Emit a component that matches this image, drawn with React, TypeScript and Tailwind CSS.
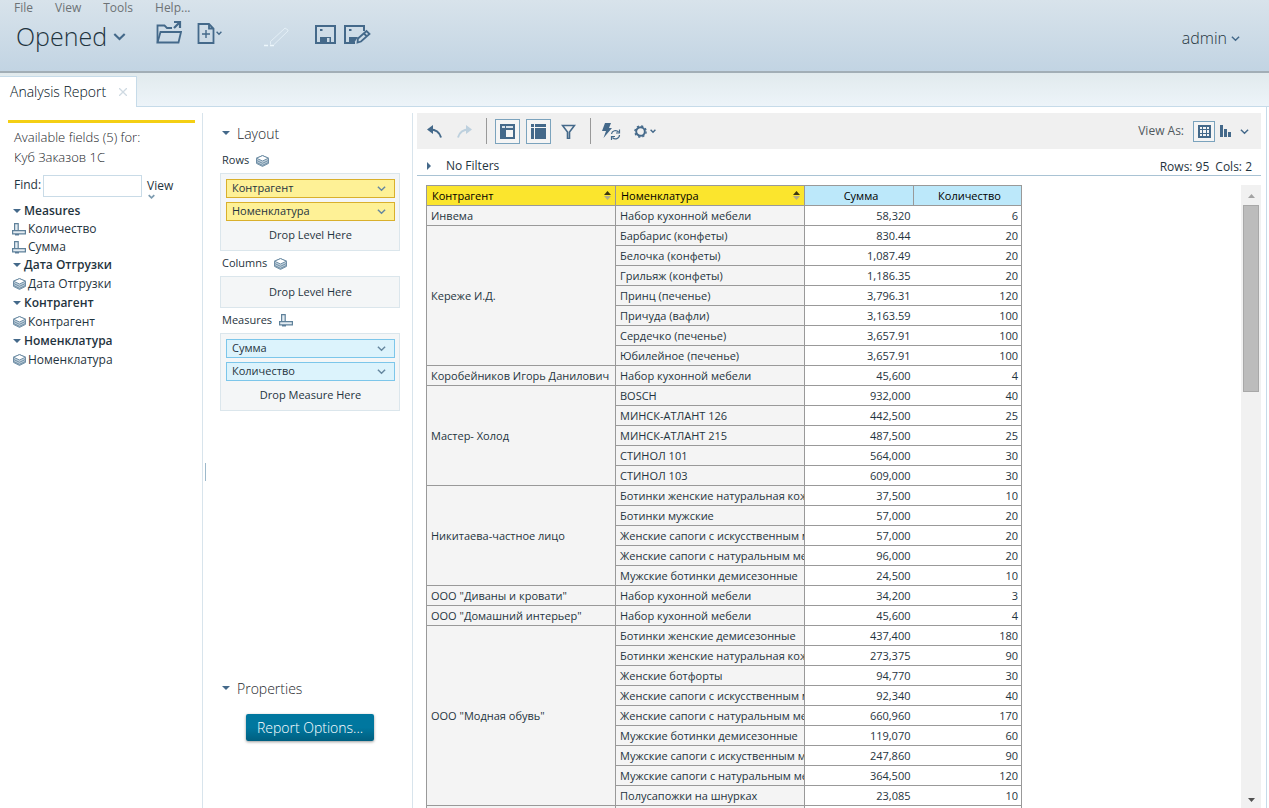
import type { ReactNode } from "react";
import { clsx } from "clsx";

type Item = [name: string, sum: string, qty: string];

const GROUPS: { name: string; items: Item[] }[] = [
  { name: "Инвема", items: [["Набор кухонной мебели", "58,320", "6"]] },
  {
    name: "Кереже И.Д.",
    items: [
      ["Барбарис (конфеты)", "830.44", "20"],
      ["Белочка (конфеты)", "1,087.49", "20"],
      ["Грильяж (конфеты)", "1,186.35", "20"],
      ["Принц (печенье)", "3,796.31", "120"],
      ["Причуда (вафли)", "3,163.59", "100"],
      ["Сердечко (печенье)", "3,657.91", "100"],
      ["Юбилейное (печенье)", "3,657.91", "100"],
    ],
  },
  { name: "Коробейников Игорь Данилович", items: [["Набор кухонной мебели", "45,600", "4"]] },
  {
    name: "Мастер- Холод",
    items: [
      ["BOSCH", "932,000", "40"],
      ["МИНСК-АТЛАНТ 126", "442,500", "25"],
      ["МИНСК-АТЛАНТ 215", "487,500", "25"],
      ["СТИНОЛ 101", "564,000", "30"],
      ["СТИНОЛ 103", "609,000", "30"],
    ],
  },
  {
    name: "Никитаева-частное лицо",
    items: [
      ["Ботинки женские натуральная кожа", "37,500", "10"],
      ["Ботинки мужские", "57,000", "20"],
      ["Женские сапоги с искусственным мехом", "57,000", "20"],
      ["Женские сапоги с натуральным мехом", "96,000", "20"],
      ["Мужские ботинки демисезонные", "24,500", "10"],
    ],
  },
  { name: 'ООО "Диваны и кровати"', items: [["Набор кухонной мебели", "34,200", "3"]] },
  { name: 'ООО "Домашний интерьер"', items: [["Набор кухонной мебели", "45,600", "4"]] },
  {
    name: 'ООО "Модная обувь"',
    items: [
      ["Ботинки женские демисезонные", "437,400", "180"],
      ["Ботинки женские натуральная кожа", "273,375", "90"],
      ["Женские ботфорты", "94,770", "30"],
      ["Женские сапоги с искусственным мехом", "92,340", "40"],
      ["Женские сапоги с натуральным мехом", "660,960", "170"],
      ["Мужские ботинки демисезонные", "119,070", "60"],
      ["Мужские сапоги с искуственным мехом", "247,860", "90"],
      ["Мужские сапоги с натуральным мехом", "364,500", "120"],
      ["Полусапожки на шнурках", "23,085", "10"],
    ],
  },
  { name: "", items: [["", "", ""]] },
];

const FIELDS = [
  { name: "Measures", measure: true, fields: ["Количество", "Сумма"] },
  { name: "Дата Отгрузки", measure: false, fields: ["Дата Отгрузки"] },
  { name: "Контрагент", measure: false, fields: ["Контрагент"] },
  { name: "Номенклатура", measure: false, fields: ["Номенклатура"] },
];

function Chevron({ className, size = 10 }: { className?: string; size?: number }) {
  return (
    <svg width={size} height={size} viewBox="0 0 10 10" fill="none" stroke="currentColor" strokeWidth={size < 8 ? 2.4 : 1.6} className={className}>
      <path d="M1 3l4 4 4-4" />
    </svg>
  );
}

function Triangle({ right = false }: { right?: boolean }) {
  return (
    <svg width="8" height="8" viewBox="0 0 8 8" fill="#44698a" className="shrink-0">
      <path d={right ? "M2 0v8l4-4z" : "M0 2h8L4 6z"} />
    </svg>
  );
}

function LevelIcon() {
  return (
    <svg width="13" height="12" viewBox="0 0 13 12" fill="none" stroke="#6f8ea5" className="shrink-0">
      <path d="M.5 3.2L6.5.6l6 2.6v5.2l-6 3-6-3z" fill="#c3d2dd" />
      <path d="M.5 3.2L6.5.6l6 2.6-6 2.8z" fill="#fff" />
      <path d="M.5 5.4l6 2.9 6-2.9M.5 7.4l6 2.9 6-2.9" />
    </svg>
  );
}

function MeasureIcon() {
  return (
    <svg width="14" height="13" viewBox="0 0 14 13" fill="none" stroke="#5f819a" strokeWidth="1.2" className="shrink-0">
      <path d="M2.6.6h3.6v7H2.6z" fill="#e4ecf2" />
      <path d="M.6 7.6h12.8v3.2H.6z" fill="#e4ecf2" />
      <path d="M3 11.8h4" stroke="#44698a" />
    </svg>
  );
}

function IconButton({ label, boxed, className, children }: { label: string; boxed?: boolean; className?: string; children: ReactNode }) {
  return (
    <button aria-label={label} className={clsx("flex shrink-0 items-center justify-center text-[#44698a]", boxed && "border border-[#7ba3bd] bg-[#f5f5f5]", className)}>
      {children}
    </button>
  );
}

function Header() {
  return (
    <header className="h-[73px] shrink-0 border-b-2 border-[#a2aeb6] bg-linear-to-b from-[#d8e3eb] to-[#c2d4e3]">
      <nav className="flex h-4 gap-[22px] pl-[14px] text-[12px] leading-4 text-[#6d7275]">
        <a href="#file">File</a>
        <a href="#view">View</a>
        <a href="#tools">Tools</a>
        <a href="#help">Help...</a>
      </nav>
      <div className="flex h-10 items-center pl-4">
        <button className="flex w-[140px] items-center gap-1.5 text-[25px] font-light leading-8 text-[#1f3440]">
          Opened
          <Chevron size={13} className="text-[#44698a]" />
        </button>
        <IconButton label="Open" className="mb-2">
          <svg width="26" height="24" viewBox="0 0 26 24" fill="none" stroke="currentColor" strokeWidth="1.8">
            <path d="M1.5 22.5V5.500h7l2.500 2.500H16M22 11v2" />
            <path d="M1.5 22.500L4.500 12h20.500L22.500 22.500z" />
            <path d="M18 8L23.500 2.500M18 2h6v6" strokeWidth="2.200" />
          </svg>
        </IconButton>
        <IconButton label="New" className="mb-1.5 ml-[15px] gap-px">
          <svg width="18" height="21" viewBox="0 0 18 21" fill="none" stroke="currentColor" strokeWidth="1.8">
            <path d="M1.500 1h10.500L16.500 5.500V20h-15zM12 1v4.500h4.500" />
            <path d="M5 11h8M9 7v8" strokeWidth="1.400" />
          </svg>
          <Chevron size={6} />
        </IconButton>
        <svg width="26" height="21" viewBox="0 0 26 21" fill="none" stroke="#edf7fc" strokeWidth="1" className="ml-[42px]">
          <path d="M0 19.500h4M6 19.500h4" strokeWidth="1.500" />
          <path d="M6.500 18.500v-3L20 3M10 18.500L24 5M20 3l1-1 3 2v1" strokeOpacity="0.7" />
        </svg>
        <IconButton label="Save" className="mb-1 ml-[25px]">
          <svg width="21" height="19" viewBox="0 0 21 19" fill="none" stroke="currentColor" strokeWidth="2">
            <path d="M1 1h19v17H1z" />
            <path d="M5 18v-6h11v6" fill="currentColor" stroke="none" />
            <path d="M12 13h2.500v4H12z" fill="#cbdae6" stroke="none" />
            <path d="M5 5h2.500" />
          </svg>
        </IconButton>
        <IconButton label="Save As" className="mb-1 ml-2">
          <svg width="27" height="19" viewBox="0 0 27 19" fill="none" stroke="currentColor" strokeWidth="2">
            <path d="M11 18H1V1h19v5" />
            <path d="M5 18v-6h9l-4 6z" fill="currentColor" stroke="none" />
            <path d="M5 5h2.500" />
            <path d="M13.500 17.500l.5-4 8.500-7.500 3 3-8.500 7.500zM20 8.500l3 3" strokeWidth="1.800" />
          </svg>
        </IconButton>
        <button className="ml-auto mr-[29px] mt-1 flex items-center gap-1 text-[16px] font-light leading-6 text-[#1f3440]">
          admin
          <Chevron size={9} className="text-[#44698a]" />
        </button>
      </div>
    </header>
  );
}

function Tabs() {
  return (
    <div className="flex h-[34px] shrink-0 items-end border-b border-[#c6dbe9] bg-linear-to-b from-[#e1eaed] to-[#edf4f9]">
      <div className="-mb-px flex h-[31px] w-[137px] items-center justify-between border-r border-t border-[#c6dbe9] bg-white pl-[10px] pr-[9px]">
        <button className="whitespace-nowrap text-[14px] font-light leading-5 text-[#00101a]">Analysis Report</button>
        <button aria-label="Close tab" className="text-[#cfdae2]">
          <svg width="8" height="8" viewBox="0 0 8 8" stroke="currentColor" strokeWidth="1.3">
            <path d="M0 0l8 8M8 0L0 8" />
          </svg>
        </button>
      </div>
    </div>
  );
}

function FieldList() {
  return (
    <aside className="w-[203px] shrink-0 border-r border-[#d8e4ec] pl-2 pr-[7px] pt-[7px]">
      <div className="h-[3px] bg-[#f4cf14]" />
      <div className="mt-1 pl-1.5 text-[13px] font-light leading-5 text-[#1d272c]">
        <p>Available fields (5) for:</p>
        <p>Куб Заказов 1С</p>
      </div>
      <div className="mt-2 flex h-[27px] items-start pl-1.5 text-[12px]">
        <label htmlFor="find" className="w-[29px] leading-5">Find:</label>
        <input id="find" className="h-[22px] w-[99px] border border-[#c9dbe7] px-1 outline-none" />
        <button className="ml-[5px] flex flex-col items-start leading-[22px]">
          View
          <Chevron size={7} className="-mt-1 ml-px text-[#7d9bb0]" />
        </button>
      </div>
      <ul className="text-[12px]">
        {FIELDS.map((group) => (
          <li key={group.name}>
            <button className="flex h-[18px] items-center gap-[3px] pl-[5px] font-semibold leading-[18px]">
              <Triangle />
              {group.name}
            </button>
            <ul>
              {group.fields.map((field) => (
                <li key={field} className={clsx("flex items-center gap-[2px] leading-[18px]", group.measure ? "h-[18px] pl-1" : "h-5 pl-[5px]")}>
                  {group.measure ? <MeasureIcon /> : <LevelIcon />}
                  {field}
                </li>
              ))}
            </ul>
          </li>
        ))}
      </ul>
    </aside>
  );
}

function DropZone({ title, icon, hint, items = [], measure }: { title: string; icon: ReactNode; hint: string; items?: string[]; measure?: boolean }) {
  return (
    <section className="text-[11px]">
      <h3 className="flex h-[25px] items-center gap-[7px] pl-0.5">
        {title}
        {icon}
      </h3>
      <div className="flex flex-col gap-1 border border-[#dbe6ec] bg-[#f4f6f7] py-[5px] pl-[5px] pr-1">
        {items.map((item) => (
          <button key={item} className={clsx("flex h-[19px] items-center justify-between border pl-[5px] pr-2", measure ? "border-[#7cc6ea] bg-[#dcf3fc]" : "border-[#d9b02c] bg-[#fef196]")}>
            {item}
            <Chevron size={9} className="text-[#6688a0]" />
          </button>
        ))}
        <p className="h-5 text-center leading-5">{hint}</p>
      </div>
    </section>
  );
}

function LayoutPanel() {
  return (
    <aside className="flex w-[207px] shrink-0 flex-col border-r border-[#d8e4ec] pl-[14px] pr-3 pt-[7px]">
      <button className="mb-0.5 flex h-[26px] items-center gap-[7px] pl-0.5 text-[14px] font-light text-[#1d272c]">
        <Triangle />
        Layout
      </button>
      <DropZone title="Rows" icon={<LevelIcon />} hint="Drop Level Here" items={["Контрагент", "Номенклатура"]} />
      <DropZone title="Columns" icon={<LevelIcon />} hint="Drop Level Here" />
      <DropZone title="Measures" icon={<MeasureIcon />} hint="Drop Measure Here" items={["Сумма", "Количество"]} measure />
      <div className="mb-[67px] mt-auto flex flex-col items-start">
        <button className="flex h-6 items-center gap-[7px] pl-0.5 text-[14px] font-light text-[#1d272c]">
          <Triangle />
          Properties
        </button>
        <button className="mt-3.5 h-[27px] w-32 self-center whitespace-nowrap rounded-xs bg-linear-to-b from-[#00779f] from-50% to-[#005f80] text-[14px] font-light text-white shadow-[0_1px_3px_#0006]">
          Report Options...
        </button>
      </div>
    </aside>
  );
}

function Toolbar() {
  return (
    <div className="flex h-9 shrink-0 items-center bg-[#f0f0f0] pl-2 pr-3 text-[#44698a]">
      <IconButton label="Undo" className="w-[18px]">
        <svg width="15" height="13" viewBox="0 0 15 13" fill="none" stroke="currentColor" strokeWidth="2">
          <path d="M3 4.500c6 0 9.500 2.500 11 8" />
          <path d="M6 0v9L0 4.500z" fill="currentColor" stroke="none" />
        </svg>
      </IconButton>
      <IconButton label="Redo" className="ml-3 w-[18px] opacity-35">
        <svg width="15" height="13" viewBox="0 0 15 13" fill="none" stroke="#5f97bd" strokeWidth="2">
          <path d="M12 4.500c-6 0-9.500 2.500-11 8" />
          <path d="M9 0v9l6-4.500z" fill="#5f97bd" stroke="none" />
        </svg>
      </IconButton>
      <span className="ml-[13px] h-[26px] w-px bg-[#999]" />
      <IconButton label="Field list" boxed className="ml-2 size-[25px]">
        <svg width="15" height="15" viewBox="0 0 15 15" fill="currentColor">
          <path d="M0 0h15v15H0z" />
          <path d="M6 6h7v7H6z" fill="#f5f5f5" />
          <path d="M2 2h3v2H2zM6 2h7v2H6z" fill="#d8e2ea" />
        </svg>
      </IconButton>
      <IconButton label="Layout panel" boxed className="ml-1.5 size-[25px]">
        <svg width="15" height="15" viewBox="0 0 15 15" fill="currentColor">
          <path d="M0 0h3v3H0zM4 0h11v3H4zM0 4h3v11H0zM4 4h11v11H4z" />
        </svg>
      </IconButton>
      <IconButton label="Filters" className="ml-[9px] w-4">
        <svg width="15" height="15" viewBox="0 0 15 15" fill="none" stroke="currentColor" strokeWidth="1.6">
          <path d="M1.500 1.500h12L8.500 8v6.500h-2V8z" />
        </svg>
      </IconButton>
      <span className="ml-[14px] h-[26px] w-px bg-[#999]" />
      <IconButton label="Auto refresh" className="ml-[11px]">
        <svg width="19" height="17" viewBox="0 0 19 17" fill="none" stroke="currentColor" strokeWidth="1.2">
          <path d="M3 0h6L7 5h3L1.500 15 4 8H0z" fill="currentColor" stroke="none" />
          <path d="M9.500 11a4 4 0 0 1 7-2M17.500 12a4 4 0 0 1-7 2.500M17.500 6.500V10H14M9.500 17v-3.500H13" />
        </svg>
      </IconButton>
      <IconButton label="More options" className="ml-[13px] gap-[3px]">
        <svg width="13" height="13" viewBox="0 0 13 13" fill="none" stroke="currentColor">
          <circle cx="6.500" cy="6.500" r="4.300" strokeWidth="1.900" />
          <circle cx="6.500" cy="6.500" r="5.600" strokeWidth="1.400" strokeDasharray="2.200 2.200" />
        </svg>
        <Chevron size={6} />
      </IconButton>
      <span className="ml-auto whitespace-nowrap text-[12px] text-[#50595e]">View As:</span>
      <IconButton label="Table" boxed className="ml-[9px] h-[21px] w-[22px]">
        <svg width="13" height="13" viewBox="0 0 13 13" fill="none" stroke="currentColor">
          <path d="M1 1h11v11H1z" strokeWidth="2" />
          <path d="M4.500 1v11M8.500 1v11M1 4.500h11M1 8.500h11" />
        </svg>
      </IconButton>
      <IconButton label="Chart" className="ml-[5px]">
        <svg width="11" height="12" viewBox="0 0 11 12" fill="currentColor">
          <path d="M0 0h3v12H0zM4 4h3v8H4zM8 7h3v5H8z" />
        </svg>
      </IconButton>
      <IconButton label="Chart type" className="ml-[9px]">
        <Chevron size={9} />
      </IconButton>
    </div>
  );
}

function SortIcon() {
  return (
    <svg width="7" height="9" viewBox="0 0 7 9" className="shrink-0">
      <path d="M0 4l3.500-4L7 4z" fill="#3b3610" />
      <path d="M0 5h7L3.500 9z" fill="#b3ad8a" />
    </svg>
  );
}

function PivotTable() {
  return (
    <table className="w-[596px] shrink-0 table-fixed border-collapse self-start whitespace-nowrap text-[11px] leading-[19px]">
      <colgroup>
        <col className="w-[189px]" />
        <col className="w-[189px]" />
        <col className="w-[109px]" />
        <col className="w-[108px]" />
      </colgroup>
      <thead className="text-black">
        <tr className="h-5">
          {["Контрагент", "Номенклатура"].map((name) => (
            <th key={name} className="border border-[#999] bg-[#fbe52d] py-0 pl-[5px] pr-1 font-medium">
              <span className="flex items-center justify-between">
                {name}
                <SortIcon />
              </span>
            </th>
          ))}
          <th className="border border-[#999] bg-[#bce8fa] p-0 pl-1 font-medium">Сумма</th>
          <th className="border border-[#999] bg-[#bce8fa] p-0 pl-1 font-medium">Количество</th>
        </tr>
      </thead>
      <tbody>
        {GROUPS.map((group) =>
          group.items.map(([name, sum, qty], i) => (
            <tr key={`${group.name}-${i}`} className="h-5">
              {i === 0 && (
                <td rowSpan={group.items.length} className="border border-[#999] bg-[#f4f4f4] p-0 pl-1">
                  {group.name}
                </td>
              )}
              <td className="overflow-hidden border border-[#999] bg-[#f4f4f4] p-0 pl-1">{name}</td>
              <td className="border-y border-[#999] p-0 pr-[3px] text-right">{sum}</td>
              <td className="border-y border-r border-[#999] p-0 pr-[3px] text-right">{qty}</td>
            </tr>
          ))
        )}
      </tbody>
    </table>
  );
}

function ScrollBar() {
  return (
    <div className="ml-auto flex w-5 shrink-0 flex-col items-center bg-[#f1f1f1]">
      <svg width="7" height="20" viewBox="0 0 7 20" fill="#a3a3a3" className="shrink-0">
        <path d="M0 13l3.500-4L7 13z" />
      </svg>
      <div className="h-[30%] w-4 border border-[#a8a8a8] bg-[#bcbcbc]" />
      <svg width="7" height="16" viewBox="0 0 7 16" fill="#505050" className="mt-auto shrink-0">
        <path d="M0 6h7l-3.500 4z" />
      </svg>
    </div>
  );
}

function Report() {
  return (
    <main className="mr-0.5 flex min-w-0 grow flex-col border-r border-[#c6dbe9] pl-1 pr-[5px] pt-1.5">
      <Toolbar />
      <div className="flex h-[27px] shrink-0 items-end border-b border-[#a9c3d4] pl-2">
        <button className="flex items-center gap-[13px] text-[12px] leading-[18px]">
          <Triangle right />
          No Filters
        </button>
        <p className="ml-auto mr-[9px] flex gap-[6px] text-[12px] leading-4">
          <span>Rows: 95</span>
          <span>Cols: 2</span>
        </p>
      </div>
      <div className="mt-[9px] flex min-h-0 grow overflow-hidden pl-[9px]">
        <PivotTable />
        <ScrollBar />
      </div>
    </main>
  );
}

export default function App() {
  return (
    <div className="flex h-screen flex-col overflow-hidden bg-white font-['Open_Sans',sans-serif] text-[#1f3440]">
      <Header />
      <Tabs />
      <div className="flex min-h-0 grow">
        <div className="flex shrink-0 pt-1.5">
          <FieldList />
          <div className="mt-[22px] flex items-center pl-[2px]">
            <span className="h-[18px] w-px bg-[#9db9cb]" />
          </div>
          <LayoutPanel />
        </div>
        <Report />
      </div>
    </div>
  );
}
